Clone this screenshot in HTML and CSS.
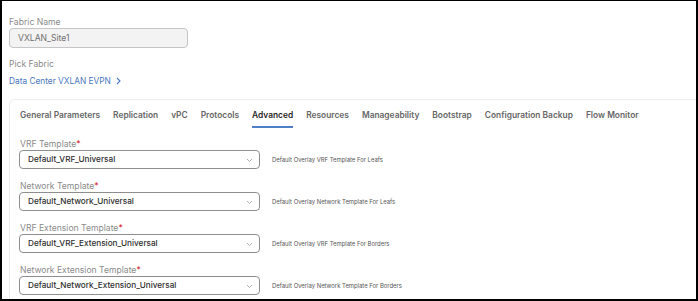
FILE: index.html
```html
<!DOCTYPE html>
<html>
<head>
<title>Fabric Settings</title>
<link rel="stylesheet" href="styles.css">
</head>
<body>
  <div class="frame">
    <div class="label">Fabric Name</div>
    <div class="name-input">VXLAN_Site1</div>

    <div class="label pick">Pick Fabric</div>
    <a class="fabric-link" href="#">Data Center VXLAN EVPN
      <svg width="5" height="8" viewBox="0 0 5 8"><path d="M1 1 L4 4 L1 7" fill="none" stroke="#4a78c2" stroke-width="1.1"/></svg>
    </a>

    <div class="card">
      <nav class="tabs">
        <span class="tab">General Parameters</span>
        <span class="tab">Replication</span>
        <span class="tab">vPC</span>
        <span class="tab">Protocols</span>
        <span class="tab active">Advanced</span>
        <span class="tab">Resources</span>
        <span class="tab">Manageability</span>
        <span class="tab">Bootstrap</span>
        <span class="tab">Configuration Backup</span>
        <span class="tab">Flow Monitor</span>
      </nav>

      <div class="field">
        <div class="label">VRF Template<span class="req">*</span></div>
        <div class="row">
          <div class="select">Default_VRF_Universal
            <svg class="chev" width="7" height="5" viewBox="0 0 7 5"><path d="M1 1 L3.5 3.5 L6 1" fill="none" stroke="#a8a8a8" stroke-width="0.9"/></svg>
          </div>
          <span class="help">Default Overlay VRF Template For Leafs</span>
        </div>
      </div>

      <div class="field">
        <div class="label">Network Template<span class="req">*</span></div>
        <div class="row">
          <div class="select">Default_Network_Universal
            <svg class="chev" width="7" height="5" viewBox="0 0 7 5"><path d="M1 1 L3.5 3.5 L6 1" fill="none" stroke="#a8a8a8" stroke-width="0.9"/></svg>
          </div>
          <span class="help">Default Overlay Network Template For Leafs</span>
        </div>
      </div>

      <div class="field">
        <div class="label">VRF Extension Template<span class="req">*</span></div>
        <div class="row">
          <div class="select">Default_VRF_Extension_Universal
            <svg class="chev" width="7" height="5" viewBox="0 0 7 5"><path d="M1 1 L3.5 3.5 L6 1" fill="none" stroke="#a8a8a8" stroke-width="0.9"/></svg>
          </div>
          <span class="help">Default Overlay VRF Template For Borders</span>
        </div>
      </div>

      <div class="field">
        <div class="label">Network Extension Template<span class="req">*</span></div>
        <div class="row">
          <div class="select">Default_Network_Extension_Universal
            <svg class="chev" width="7" height="5" viewBox="0 0 7 5"><path d="M1 1 L3.5 3.5 L6 1" fill="none" stroke="#a8a8a8" stroke-width="0.9"/></svg>
          </div>
          <span class="help">Default Overlay Network Template For Borders</span>
        </div>
      </div>
    </div>
  </div>
</body>
</html>
```

FILE: styles.css
```css
body {
  margin: 0;
  background: #ffffff;
  font-family: Inter, "Noto Sans", sans-serif;
}

.frame {
  width: 698px;
  height: 301px;
  box-sizing: border-box;
  border-top: 1px solid #000;
  border-left: 2px solid #000;
  border-right: 2px solid #000;
  border-bottom: 2px solid #000;
  padding: 15px 0 0 7px;
  overflow: hidden;
}

.label {
  font-size: 8.6px;
  line-height: 12px;
  color: #8a8a8a;
}
.req {
  color: #d3272b;
}

.name-input {
  width: 179px;
  height: 20px;
  box-sizing: border-box;
  border: 1px solid #c6c6c6;
  border-radius: 4px;
  background: #f3f3f3;
  padding-left: 8px;
  font-size: 8.6px;
  line-height: 18px;
  color: #707070;
}

.pick {
  margin-top: 10px;
}

.fabric-link {
  display: flex;
  align-items: center;
  gap: 5px;
  margin-top: 5px;
  font-size: 8.3px;
  line-height: 12px;
  color: #4a78c2;
  text-decoration: none;
}

.card {
  margin-top: 12px;
  margin-right: -10px;
  border: 1px solid #ececec;
  border-radius: 6px;
  padding: 9px 0 0 9px;
  height: 220px;
}

.tabs {
  display: flex;
  gap: 13px;
  padding-left: 1px;
}
.tab {
  font-size: 8.4px;
  font-weight: 600;
  line-height: 12px;
  color: #666666;
  padding-bottom: 5px;
  border-bottom: 2px solid transparent;
  white-space: nowrap;
}
.tab.active {
  color: #1f1f1f;
  border-bottom-color: #4f7fc8;
}

.field {
  margin-top: 10px;
}
.field + .field {
  margin-top: 11px;
}
.field .label {
  padding-left: 1px;
}

.row {
  display: flex;
  align-items: center;
  gap: 12px;
}

.select {
  position: relative;
  width: 241px;
  height: 19px;
  box-sizing: border-box;
  border: 1px solid #8e8e8e;
  border-radius: 4px;
  padding-left: 8px;
  font-size: 8.2px;
  font-weight: 500;
  line-height: 17px;
  color: #2e2e2e;
}
.chev {
  position: absolute;
  right: 6px;
  top: 7px;
}

.help {
  font-size: 5.9px;
  color: #555;
  white-space: nowrap;
}
```
